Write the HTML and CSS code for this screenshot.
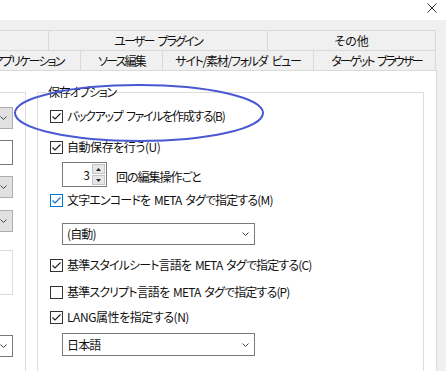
FILE: index.html
```html
<!DOCTYPE html>
<html lang="ja">
<head>
    <meta charset="UTF-8">
    <title>オプション</title>
    <link rel="stylesheet" href="styles.css">
</head>
<body>

    <div class="titlebar">
        <svg class="close" width="10" height="10" viewBox="0 0 10 10">
            <path d="M0.5 0.5 L9.5 9.5 M9.5 0.5 L0.5 9.5" stroke="#333" stroke-width="1" fill="none"/>
        </svg>
    </div>

    <div class="dialog">
        <div class="tabrow">
            <div class="tab tab-first"></div>
            <div class="tab tab-plugin kana">ユーザー プラグイン</div>
            <div class="tab tab-other">その他</div>
        </div>
        <div class="tabrow">
            <div class="tab tab-app kana">アプリケーション</div>
            <div class="tab tab-source kana">ソース編集</div>
            <div class="tab tab-site kana-mid">サイト/素材/フォルダ ビュー</div>
            <div class="tab tab-target kana">ターゲット ブラウザー</div>
        </div>

        <div class="pane">
            <!-- left group, mostly cut off -->
            <div class="group-left">
                <div class="ctl combo gray c1"><span></span><svg class="chev" width="7" height="4" viewBox="0 0 7 4"><path d="M0.5 0.5 L3.5 3.5 L6.5 0.5" stroke="#444" fill="none"/></svg></div>
                <div class="ctl textbox c2"></div>
                <div class="ctl combo gray c3"><span></span><svg class="chev" width="7" height="4" viewBox="0 0 7 4"><path d="M0.5 0.5 L3.5 3.5 L6.5 0.5" stroke="#444" fill="none"/></svg></div>
                <div class="ctl combo gray c4"><span></span><svg class="chev" width="7" height="4" viewBox="0 0 7 4"><path d="M0.5 0.5 L3.5 3.5 L6.5 0.5" stroke="#444" fill="none"/></svg></div>
                <div class="ctl listbox c5"></div>
                <div class="ctl combo c6"><span></span><svg class="chev" width="7" height="4" viewBox="0 0 7 4"><path d="M0.5 0.5 L3.5 3.5 L6.5 0.5" stroke="#444" fill="none"/></svg></div>
            </div>

            <fieldset class="group">
                <legend class="kana-mid">保存オプション</legend>

                <div class="check r1">
                    <span class="cb"><svg width="11" height="11" viewBox="0 0 11 11"><path d="M1.5 5.5 L4 8 L9.5 2.5" stroke="#222" stroke-width="1.2" fill="none"/></svg></span>
                    <span class="kana-mid">バックアップ ファイルを作成する(B)</span>
                </div>
                <div class="check r2">
                    <span class="cb"><svg width="11" height="11" viewBox="0 0 11 11"><path d="M1.5 5.5 L4 8 L9.5 2.5" stroke="#222" stroke-width="1.2" fill="none"/></svg></span>
                    <span class="ls-s">自動保存を行う(U)</span>
                </div>
                <div class="spinrow">
                    <div class="spin">
                        <span class="spin-val">3</span>
                        <span class="spin-btns">
                            <span class="spin-btn"><svg width="5" height="3" viewBox="0 0 5 3"><path d="M0 3 L2.5 0 L5 3 Z" fill="#222"/></svg></span>
                            <span class="spin-btn"><svg width="5" height="3" viewBox="0 0 5 3"><path d="M0 0 L2.5 3 L5 0 Z" fill="#222"/></svg></span>
                        </span>
                    </div>
                    <span class="spin-label">回の編集操作ごと</span>
                </div>
                <div class="check r3">
                    <span class="cb focus"><svg width="11" height="11" viewBox="0 0 11 11"><path d="M1.5 5.5 L4 8 L9.5 2.5" stroke="#0b6fd0" stroke-width="1.2" fill="none"/></svg></span>
                    <span>文字エンコードを META タグで指定する(M)</span>
                </div>
                <div class="combo wide r4"><span>(自動)</span><svg class="chev" width="7" height="4" viewBox="0 0 7 4"><path d="M0.5 0.5 L3.5 3.5 L6.5 0.5" stroke="#444" fill="none"/></svg></div>
                <div class="check r5">
                    <span class="cb"><svg width="11" height="11" viewBox="0 0 11 11"><path d="M1.5 5.5 L4 8 L9.5 2.5" stroke="#222" stroke-width="1.2" fill="none"/></svg></span>
                    <span>基準スタイルシート言語を META タグで指定する(C)</span>
                </div>
                <div class="check r6">
                    <span class="cb"></span>
                    <span>基準スクリプト言語を META タグで指定する(P)</span>
                </div>
                <div class="check r7">
                    <span class="cb"><svg width="11" height="11" viewBox="0 0 11 11"><path d="M1.5 5.5 L4 8 L9.5 2.5" stroke="#222" stroke-width="1.2" fill="none"/></svg></span>
                    <span class="ls-s">LANG属性を指定する(N)</span>
                </div>
                <div class="combo wide r8"><span>日本語</span><svg class="chev" width="7" height="4" viewBox="0 0 7 4"><path d="M0.5 0.5 L3.5 3.5 L6.5 0.5" stroke="#444" fill="none"/></svg></div>
            </fieldset>
        </div>
    </div>

    <!-- hand-drawn highlight round the first option -->
    <svg class="mark" width="256" height="64" viewBox="0 0 256 64">
        <ellipse cx="127" cy="31" rx="124" ry="28" stroke="#4a58d2" stroke-width="2" fill="none"/>
    </svg>

</body>
</html>
```

FILE: styles.css
```css
* {
    box-sizing: border-box;
}

html, body {
    margin: 0;
    padding: 0;
    width: 446px;
    height: 371px;
    overflow: hidden;
    background: #fff;
    color: #111;
    font-family: "Noto Sans CJK JP", sans-serif;
    font-size: 12px;
    font-feature-settings: "palt";
    line-height: 14px;
    letter-spacing: -0.85px;
    word-spacing: 2px;
}

body {
    position: relative;
}

/* Meiryo UI kana run narrower than Noto, so squeeze those texts a bit more */
.kana {
    letter-spacing: -1.8px;
}

.kana-mid {
    letter-spacing: -1.3px;
}

.ls-s {
    letter-spacing: -0.45px;
}

.titlebar {
    height: 20px;
    display: flex;
    justify-content: flex-end;
    padding: 3px 9px 0 0;
}

.dialog {
    height: 351px;
    background: #f0f0f0;
    padding-top: 10px;
}

/* tabs */
.tabrow {
    display: flex;
    height: 20px;
}

.tab {
    flex: none;
    height: 20px;
    border-top: 1px solid #d9d9d9;
    border-right: 1px solid #d9d9d9;
    text-align: center;
    line-height: 19px;
    white-space: nowrap;
    word-spacing: 3px;
}

.tab-first { width: 49px; }
.tab-plugin { width: 219px; }
.tab-other { width: 168px; letter-spacing: 0; }

.tab-app { width: 105px; margin-left: -24px; }
.tab-source { width: 82px; }
.tab-site { width: 151px; }
.tab-target { width: 122px; padding-left: 4px; letter-spacing: -2.1px; }

/* page */
.pane {
    display: flex;
    align-items: flex-start;
    gap: 11px;
    width: 437px;
    height: 301px;
    background: #fff;
    border-top: 1px solid #d9d9d9;
    border-right: 1px solid #d9d9d9;
    overflow: hidden;
}

.group-left {
    flex: none;
    width: 26px;
    height: 300px;
    margin-top: 21px;
    padding-top: 14px;
    border-top: 1px solid #dcdcdc;
    border-right: 1px solid #dcdcdc;
}

.ctl {
    width: 120px;
    margin-left: -107px;
}

.combo {
    display: flex;
    align-items: center;
    justify-content: space-between;
    height: 22px;
    padding: 0 5px 0 4px;
    background: #fff;
    border: 1px solid #7a7a7a;
    white-space: nowrap;
}

.combo.gray {
    background: #e1e1e1;
    border-color: #adadad;
}

.textbox {
    height: 25px;
    border: 1px solid #7a7a7a;
    background: #fff;
}

.listbox {
    height: 45px;
    border: 1px solid #dcdcdc;
    background: #fff;
}

.c2 { margin-top: 11px; }
.c3 { margin-top: 11px; }
.c4 { margin-top: 12px; }
.c5 { margin-top: 18px; }
.c6 { margin-top: 40px; }

/* save options */
.group {
    flex: none;
    width: 387px;
    min-width: 0;
    height: 300px;
    margin: 14px 0 0;
    padding: 8px 0 0 12px;
    border: 1px solid #dcdcdc;
    border-bottom: none;
}

.group legend {
    margin-left: -3px;
    padding: 0 1px;
    line-height: 14px;
}

.check {
    display: flex;
    align-items: center;
    gap: 4px;
    height: 18px;
    white-space: nowrap;
}

.cb {
    flex: none;
    display: flex;
    align-items: center;
    justify-content: center;
    width: 13px;
    height: 13px;
    border: 1px solid #333;
    background: #fff;
}

.cb.focus {
    border-color: #0078d7;
}

.r2 { margin-top: 13px; }

.spinrow {
    display: flex;
    align-items: center;
    height: 25px;
    margin: 6px 0 0 12px;
}

.spin {
    display: flex;
    width: 45px;
    height: 25px;
    border: 1px solid #7a7a7a;
    background: #fff;
}

.spin-val {
    flex: 1;
    text-align: right;
    padding: 5px 3px 0 0;
}

.spin-btns {
    display: flex;
    flex-direction: column;
    gap: 1px;
    width: 13px;
    margin: 1px 1px 1px 0;
}

.spin-btn {
    flex: 1;
    display: flex;
    align-items: center;
    justify-content: center;
    background: #e6e6e6;
    border: 1px solid #c4c4c4;
}

.spin-label {
    margin-left: 9px;
    padding-top: 4px;
    white-space: nowrap;
    letter-spacing: -1px;
}

.r3 { margin-top: 4px; }

.wide {
    width: 193px;
    margin-left: 12px;
}

.r4 { margin-top: 14px; }
.r5 { margin-top: 11px; }
.r6 { margin-top: 9px; }
.r7 { margin-top: 7px; }
.r8 { margin-top: 7px; height: 23px; }

.mark {
    position: absolute;
    left: 12px;
    top: 82px;
}
```
